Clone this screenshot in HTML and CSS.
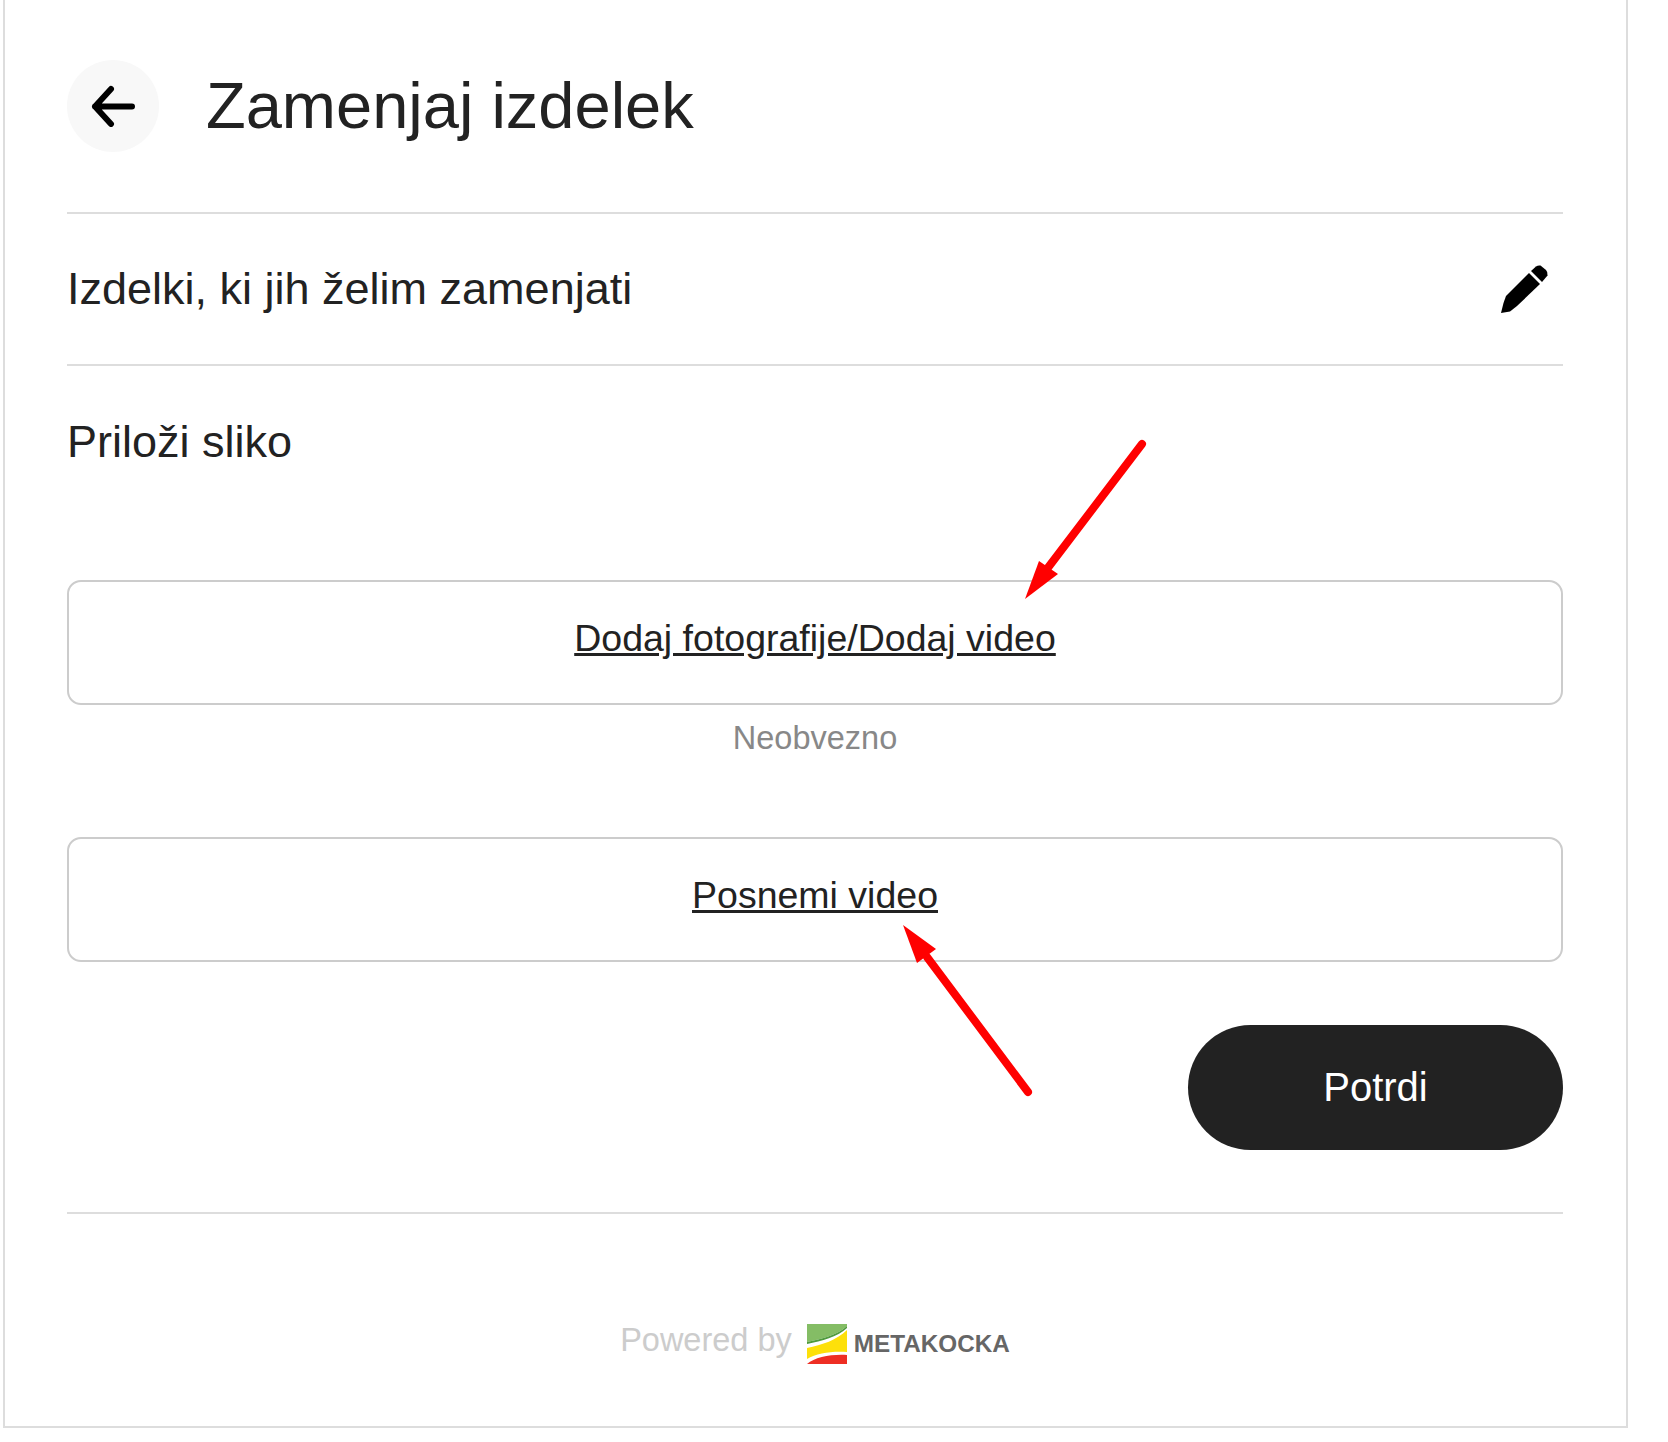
FILE: index.html
```html
<!DOCTYPE html>
<html>

<head>
    <meta charset="utf-8">
    <title>Zamenjaj izdelek</title>
    <link rel="stylesheet" href="styles.css">
</head>

<body>
    <section class="panel">
        <header class="head">
            <a class="back" href="#">
                <svg width="48" height="42" viewBox="0 0 48 42" fill="none" stroke="#000" stroke-width="6" stroke-linecap="round" stroke-linejoin="round">
                    <path d="M43 21.500H6M22 4L6 21.500 22 39" />
                </svg>
            </a>
            <h1>Zamenjaj izdelek</h1>
        </header>
        <div class="row">
            <h2>Izdelki, ki jih želim zamenjati</h2>
            <svg class="pencil" width="48" height="48" viewBox="0 0 48 48">
                <path d="M29 8L40 19 17 41 10 46.500 1 48 3.500 38 6 31z" />
                <path d="M31 6L36 1.500Q38 0 40.500 0.500L46 5Q48 7 47.500 10.500L42 17z" />
            </svg>
        </div>
        <div class="attach">
            <h2>Priloži sliko</h2>
            <div class="upload"><a href="#">Dodaj fotografije/Dodaj video</a></div>
            <p class="hint">Neobvezno</p>
            <div class="upload upload-video"><a href="#">Posnemi video</a></div>
            <div class="actions">
                <button class="confirm">Potrdi</button>
            </div>
        </div>
        <footer class="foot">
            <span class="powered">Powered by</span>
            <svg class="logo" width="40" height="40" viewBox="0 0 40 40">
                <path fill="#84bd65" d="M0 0H40V2C30 11 15 15 0 18z" />
                <path fill="#4f9a3d" d="M0 18C15 15 30 11 40 2V4C30 13 15 17 0 20z" />
                <path fill="#fde00a" d="M0 24C15 21 30 16 40 6V28C25 27 10 29 0 35z" />
                <path fill="#ee2e24" d="M0 40C8 33 25 30 40 31V40z" />
            </svg>
            <span class="brand">METAKOCKA</span>
        </footer>
    </section>

    <!-- red annotations on top of the page -->
    <svg class="notes" width="1668" height="1442" viewBox="0 0 1668 1442">
        <line x1="1142" y1="444" x2="1047" y2="569" />
        <polygon points="1025,599 1039,561 1058,574" />
        <line x1="1028" y1="1092" x2="927" y2="957" />
        <polygon points="903,925 936,949 917,963" />
    </svg>
</body>

</html>
```

FILE: styles.css
```css
body {
    margin: 0;
    font-family: "Liberation Sans", Arial, sans-serif;
    color: #222;
    background: #fff;
}

h1,
h2,
p {
    margin: 0;
    font-weight: normal;
}

a {
    color: inherit;
}

.panel {
    box-sizing: border-box;
    width: 1625px;
    height: 1428px;
    margin-left: 3px;
    padding: 0 63px 0 62px;
    border: solid #ddd;
    border-width: 0 2px 2px 2px;
}

.head {
    display: flex;
    align-items: center;
    gap: 47px;
    padding: 60px 0;
    border-bottom: 2px solid #ddd;
}

.back {
    display: flex;
    align-items: center;
    justify-content: center;
    width: 92px;
    height: 92px;
    border-radius: 50%;
    background: #f8f8f8;
}

h1 {
    font-size: 65px;
    line-height: 92px;
}

h2 {
    font-size: 45px;
    line-height: 52px;
}

.row {
    display: flex;
    align-items: center;
    justify-content: space-between;
    height: 150px;
    padding-right: 15px;
    border-bottom: 2px solid #ddd;
}

.pencil {
    fill: #000;
}

.attach {
    padding-top: 50px;
    border-bottom: 2px solid #ddd;
}

.upload {
    box-sizing: border-box;
    display: flex;
    align-items: center;
    justify-content: center;
    height: 125px;
    margin-top: 112px;
    padding-bottom: 8px;
    font-size: 37.500px;
    border: 2px solid #ccc;
    border-radius: 14px;
}

.upload-video {
    margin-top: 79px;
}

.hint {
    margin-top: 13px;
    font-size: 32.500px;
    line-height: 40px;
    text-align: center;
    color: #888;
}

.actions {
    display: flex;
    justify-content: flex-end;
    padding: 63px 0 62px;
}

.confirm {
    width: 375px;
    height: 125px;
    font: 40px "Liberation Sans", Arial, sans-serif;
    color: #fff;
    background: #222;
    border: 0;
    border-radius: 63px;
}

.foot {
    display: flex;
    align-items: center;
    justify-content: center;
    padding-top: 110px;
}

.powered {
    margin-right: 15px;
    margin-bottom: 8px;
    font-size: 32.500px;
    line-height: 30px;
    color: #ccc;
}

.logo {
    margin-right: 7px;
}

.brand {
    font-size: 24.300px;
    font-weight: bold;
    color: #666;
}

.notes {
    position: absolute;
    top: 0;
    left: 0;
    pointer-events: none;
}

.notes line {
    stroke: #f00;
    stroke-width: 8;
    stroke-linecap: round;
}

.notes polygon {
    fill: #f00;
}
```
